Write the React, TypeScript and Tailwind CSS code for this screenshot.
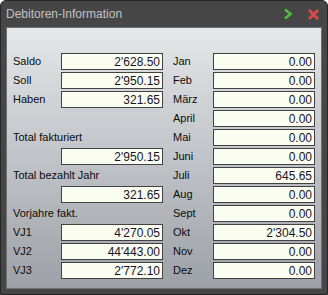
import React from "react";

type Row = { label?: string; value?: string };

const leftRows: Row[] = [
  { label: "Saldo", value: "2'628.50" },
  { label: "Soll", value: "2'950.15" },
  { label: "Haben", value: "321.65" },
  {},
  { label: "Total fakturiert" },
  { value: "2'950.15" },
  { label: "Total bezahlt Jahr" },
  { value: "321.65" },
  { label: "Vorjahre fakt." },
  { label: "VJ1", value: "4'270.05" },
  { label: "VJ2", value: "44'443.00" },
  { label: "VJ3", value: "2'772.10" },
];

const rightRows: Row[] = [
  { label: "Jan", value: "0.00" },
  { label: "Feb", value: "0.00" },
  { label: "März", value: "0.00" },
  { label: "April", value: "0.00" },
  { label: "Mai", value: "0.00" },
  { label: "Juni", value: "0.00" },
  { label: "Juli", value: "645.65" },
  { label: "Aug", value: "0.00" },
  { label: "Sept", value: "0.00" },
  { label: "Okt", value: "2'304.50" },
  { label: "Nov", value: "0.00" },
  { label: "Dez", value: "0.00" },
];

function Field({ row, labelWidth }: { row: Row; labelWidth: string }) {
  return (
    <div className="flex h-[19px] items-center">
      <div className={`${labelWidth} shrink-0 whitespace-nowrap text-[11px] leading-none text-[#0c0c0c]`}>
        {row.label}
      </div>
      {row.value !== undefined && (
        <div className="flex h-[17px] w-[102px] shrink-0 items-center justify-end border border-[#424242] bg-[#fbfdf1] pr-[2px] text-[12px] leading-none text-[#141428]">
          {row.value}
        </div>
      )}
    </div>
  );
}

export default function App() {
  return (
    <div
      className="flex h-[295px] w-[328px] flex-col rounded-t-[6px] border border-[#262626] bg-[#464646]"
      style={{ fontFamily: '"Liberation Sans", Arial, sans-serif' }}
    >
      <div className="flex h-[26px] shrink-0 items-center pl-[5px] pr-[7px]">
        <span className="flex-1 text-[12px] text-[#c2c2c2]">Debitoren-Information</span>
        <svg width="10" height="12" viewBox="0 0 10 12" className="mr-[14px]">
          <path d="M2 1.5 L7.5 6 L2 10.5" fill="none" stroke="#4fbf3a" strokeWidth="2.6" />
        </svg>
        <svg width="13" height="13" viewBox="0 0 13 13">
          <path d="M2 2 L11 11 M11 2 L2 11" fill="none" stroke="#e4474a" strokeWidth="2.6" />
        </svg>
      </div>
      <div className="mx-[5px] mb-[5px] flex flex-1 border border-[#707070] bg-gradient-to-b from-[#e5e7e9] to-[#9da1a7] pl-[6px] pt-[24px]">
        <div className="flex w-[160px] flex-col">
          {leftRows.map((r, i) => (
            <Field key={i} row={r} labelWidth="w-[48px]" />
          ))}
        </div>
        <div className="flex flex-col">
          {rightRows.map((r, i) => (
            <Field key={i} row={r} labelWidth="w-[40px]" />
          ))}
        </div>
      </div>
    </div>
  );
}
